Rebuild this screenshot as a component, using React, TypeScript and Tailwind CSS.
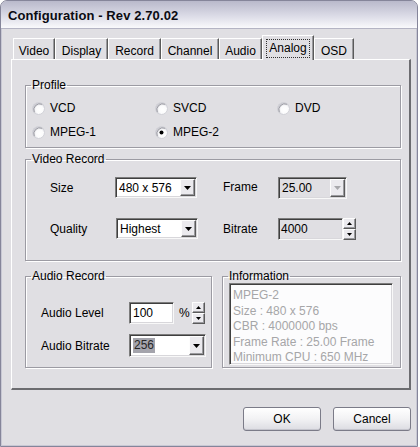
import React from "react";

const TABS = [
  { label: "Video", w: "w-[42px]" },
  { label: "Display", w: "w-[53px]" },
  { label: "Record", w: "w-[53px]" },
  { label: "Channel", w: "w-[58px]" },
  { label: "Audio", w: "w-[43px]" },
  { label: "Analog", w: "w-[52px]", active: true },
  { label: "OSD", w: "w-[40px]" },
];

const INFO = [
  "MPEG-2",
  "Size : 480 x 576",
  "CBR : 4000000 bps",
  "Frame Rate : 25.00 Frame",
  "Minimum CPU : 650 MHz",
];

// classic 3d borders
const sunken =
  "border border-t-[#7c7c7c] border-l-[#7c7c7c] border-b-[#f8f8f8] border-r-[#f8f8f8] shadow-[inset_1px_1px_0_#3f3f3f,inset_-1px_-1px_0_#d8d7db]";
const raised =
  "border border-t-[#fdfdfd] border-l-[#fdfdfd] border-b-[#5a5a5a] border-r-[#5a5a5a] shadow-[inset_-1px_-1px_0_#9a9a9e]";
const etched =
  "border border-[#9c9ba3] shadow-[inset_1px_1px_0_#ffffff,1px_1px_0_#ffffff]";

function Arrow({ up, color = "#000", w = 7 }: { up?: boolean; color?: string; w?: number }) {
  const h = Math.ceil(w / 2);
  return (
    <svg width={w} height={h} viewBox={`0 0 ${w} ${h}`}>
      <polygon points={up ? `0,${h} ${w},${h} ${w / 2},0` : `0,0 ${w},0 ${w / 2},${h}`} fill={color} />
    </svg>
  );
}

function Combo({
  value,
  className,
  disabled,
  highlight,
}: {
  value: string;
  className: string;
  disabled?: boolean;
  highlight?: boolean;
}) {
  return (
    <div className={`flex items-stretch ${sunken} ${disabled ? "bg-[#e0dfe3]" : "bg-white"} ${className}`}>
      <div className="flex flex-1 items-center pl-[3px]">
        <span className={highlight ? "bg-[#a4a4ac] px-[1px] leading-[15px] text-[#262626]" : ""}>{value}</span>
      </div>
      <div className={`m-[1px] flex w-[15px] items-center justify-center bg-[#ebeaee] ${raised}`}>
        <Arrow color={disabled ? "#a8a8ac" : "#000"} />
      </div>
    </div>
  );
}

function Spin({ className }: { className: string }) {
  return (
    <div className={`flex flex-col ${className}`}>
      <div className={`flex flex-1 items-center justify-center bg-[#ebeaee] ${raised}`}>
        <Arrow up w={5} />
      </div>
      <div className={`flex flex-1 items-center justify-center bg-[#ebeaee] ${raised}`}>
        <Arrow w={5} />
      </div>
    </div>
  );
}

function Radio({ label, checked }: { label: string; checked?: boolean }) {
  return (
    <label className="flex h-[16px] items-center gap-[5px]">
      <svg width="13" height="13" viewBox="0 0 13 13">
        <defs>
          <radialGradient id="rg" cx="0.6" cy="0.6" r="0.6">
            <stop offset="0%" stopColor="#ffffff" />
            <stop offset="55%" stopColor="#fbfbfc" />
            <stop offset="100%" stopColor="#c4c4cc" />
          </radialGradient>
        </defs>
        <circle cx="6.5" cy="6.5" r="6" fill="url(#rg)" stroke="#d2d2d8" strokeWidth="1" />
        <path d="M2.3 10.2 A6 6 0 0 1 10.2 2.3" fill="none" stroke="#9c9ca4" strokeWidth="1" />
        {checked && <circle cx="6.5" cy="6.5" r="2" fill="#000" />}
      </svg>
      <span>{label}</span>
    </label>
  );
}

function Group({
  title,
  className,
  children,
}: {
  title: string;
  className?: string;
  children: React.ReactNode;
}) {
  return (
    <fieldset className={`${etched} ${className ?? ""}`}>
      <legend className="ml-[5px] px-[1px] leading-[14px]">{title}</legend>
      {children}
    </fieldset>
  );
}

export default function App() {
  return (
    <div className="h-[447px] w-[420px] bg-white font-['Liberation_Sans',Arial,sans-serif] text-[12px] text-black">
      <div className="flex h-[447px] w-[418px] flex-col rounded-t-[7px] border border-[#85859a] bg-[#e0dfe3] shadow-[inset_1px_0_0_#c8c8d4,inset_-1px_0_0_#c8c8d4,inset_0_-1px_0_#c8c8d4]">
        {/* title bar */}
        <div className="flex h-[28px] items-center rounded-t-[6px] border-b border-[#b4b4c4] bg-gradient-to-b from-[#b9b9cb] via-[#d8d8e4] to-[#f9f9fc] pl-[7px] pt-[3px]">
          <span className="text-[13px] font-bold tracking-[0.1px] text-[#0b0b12]">Configuration - Rev 2.70.02</span>
        </div>

        <div className="flex flex-1 flex-col pl-[10px] pr-[6px] pt-[7px]">
          {/* tabs */}
          <div className="flex h-[23px] items-end pl-[2px]">
            {TABS.map((t) =>
              t.active ? (
                <div
                  key={t.label}
                  className={`relative z-10 -mb-px flex h-[25px] items-center justify-center border-l border-t border-white border-r border-r-[#5a5a5a] bg-[#e0dfe3] shadow-[inset_-1px_0_0_#9a9a9e] ${t.w}`}
                >
                  <span className="border border-dotted border-[#303030] px-[2px] leading-[17px]">{t.label}</span>
                </div>
              ) : (
                <div
                  key={t.label}
                  className={`flex h-[21px] items-center justify-center border-l border-t border-white border-r border-r-[#5a5a5a] pt-[3px] shadow-[inset_-1px_0_0_#9a9a9e] ${t.w}`}
                >
                  {t.label}
                </div>
              )
            )}
          </div>

          {/* panel */}
          <div className="flex h-[331px] w-[400px] flex-col border-l border-t border-white border-b-2 border-r-2 border-b-[#6c6c70] border-r-[#6c6c70] pl-[13px] pr-[8px] pt-[18px]">
            <Group title="Profile" className="w-[376px]">
              <div className="grid grid-cols-[123px_122px_1fr] gap-y-[8px] pb-[7px] pl-[6px] pt-[8px]">
                <Radio label="VCD" />
                <Radio label="SVCD" />
                <Radio label="DVD" />
                <Radio label="MPEG-1" />
                <Radio label="MPEG-2" checked />
              </div>
            </Group>

            <Group title="Video Record" className="mt-[4px] w-[376px]">
              <div className="flex flex-col gap-[20px] pb-[21px] pl-[24px] pt-[11px]">
                <div className="flex h-[21px] items-center">
                  <span className="w-[65px]">Size</span>
                  <Combo value="480 x 576" className="h-[21px] w-[82px]" />
                  <span className="ml-[26px] w-[55px] -translate-y-[1px]">Frame</span>
                  <Combo value="25.00" className="h-[22px] w-[69px]" disabled />
                </div>
                <div className="flex h-[21px] items-center">
                  <span className="w-[66px]">Quality</span>
                  <Combo value="Highest" className="h-[21px] w-[82px]" />
                  <span className="ml-[25px] w-[55px]">Bitrate</span>
                  <div className={`flex h-[22px] w-[65px] items-center bg-[#e0dfe3] pl-[2px] ${sunken}`}>4000</div>
                  <Spin className="h-[22px] w-[13px]" />
                </div>
              </div>
            </Group>

            <div className="mt-[8px] flex gap-[10px]">
              <Group title="Audio Record" className="w-[187px]">
                <div className="flex flex-col gap-[10px] pb-[10px] pl-[15px] pt-[19px]">
                  <div className="flex h-[22px] items-center">
                    <span className="w-[88px]">Audio Level</span>
                    <div className={`flex h-[22px] w-[45px] items-center bg-white pl-[3px] ${sunken}`}>100</div>
                    <span className="ml-[5px] w-[13px]">%</span>
                    <Spin className="h-[22px] w-[13px]" />
                  </div>
                  <div className="flex h-[23px] items-center">
                    <span className="w-[88px]">Audio Bitrate</span>
                    <Combo value="256" className="h-[23px] w-[77px]" highlight />
                  </div>
                </div>
              </Group>

              <Group title="Information" className="w-[179px]">
                <div className="pb-[1px] pl-[6px] pr-[7px]">
                  <div className={`h-[82px] bg-[#fcfcfd] pl-[3px] pt-[4px] leading-[15.5px] text-[#a6a6a8] ${sunken}`}>
                    {INFO.map((l) => (
                      <div key={l} className="whitespace-nowrap">
                        {l}
                      </div>
                    ))}
                  </div>
                </div>
              </Group>
            </div>
          </div>

          {/* buttons */}
          <div className="mt-[17px] flex w-[400px] justify-end gap-[12px]">
            {["OK", "Cancel"].map((b) => (
              <button
                key={b}
                className="h-[24px] w-[78px] rounded-[3px] border border-[#7b7b88] bg-gradient-to-b from-[#ffffff] via-[#f2f2f4] to-[#dcdce2] shadow-[inset_0_-1px_0_#c4c4cc]"
              >
                {b}
              </button>
            ))}
          </div>
        </div>
      </div>
    </div>
  );
}
